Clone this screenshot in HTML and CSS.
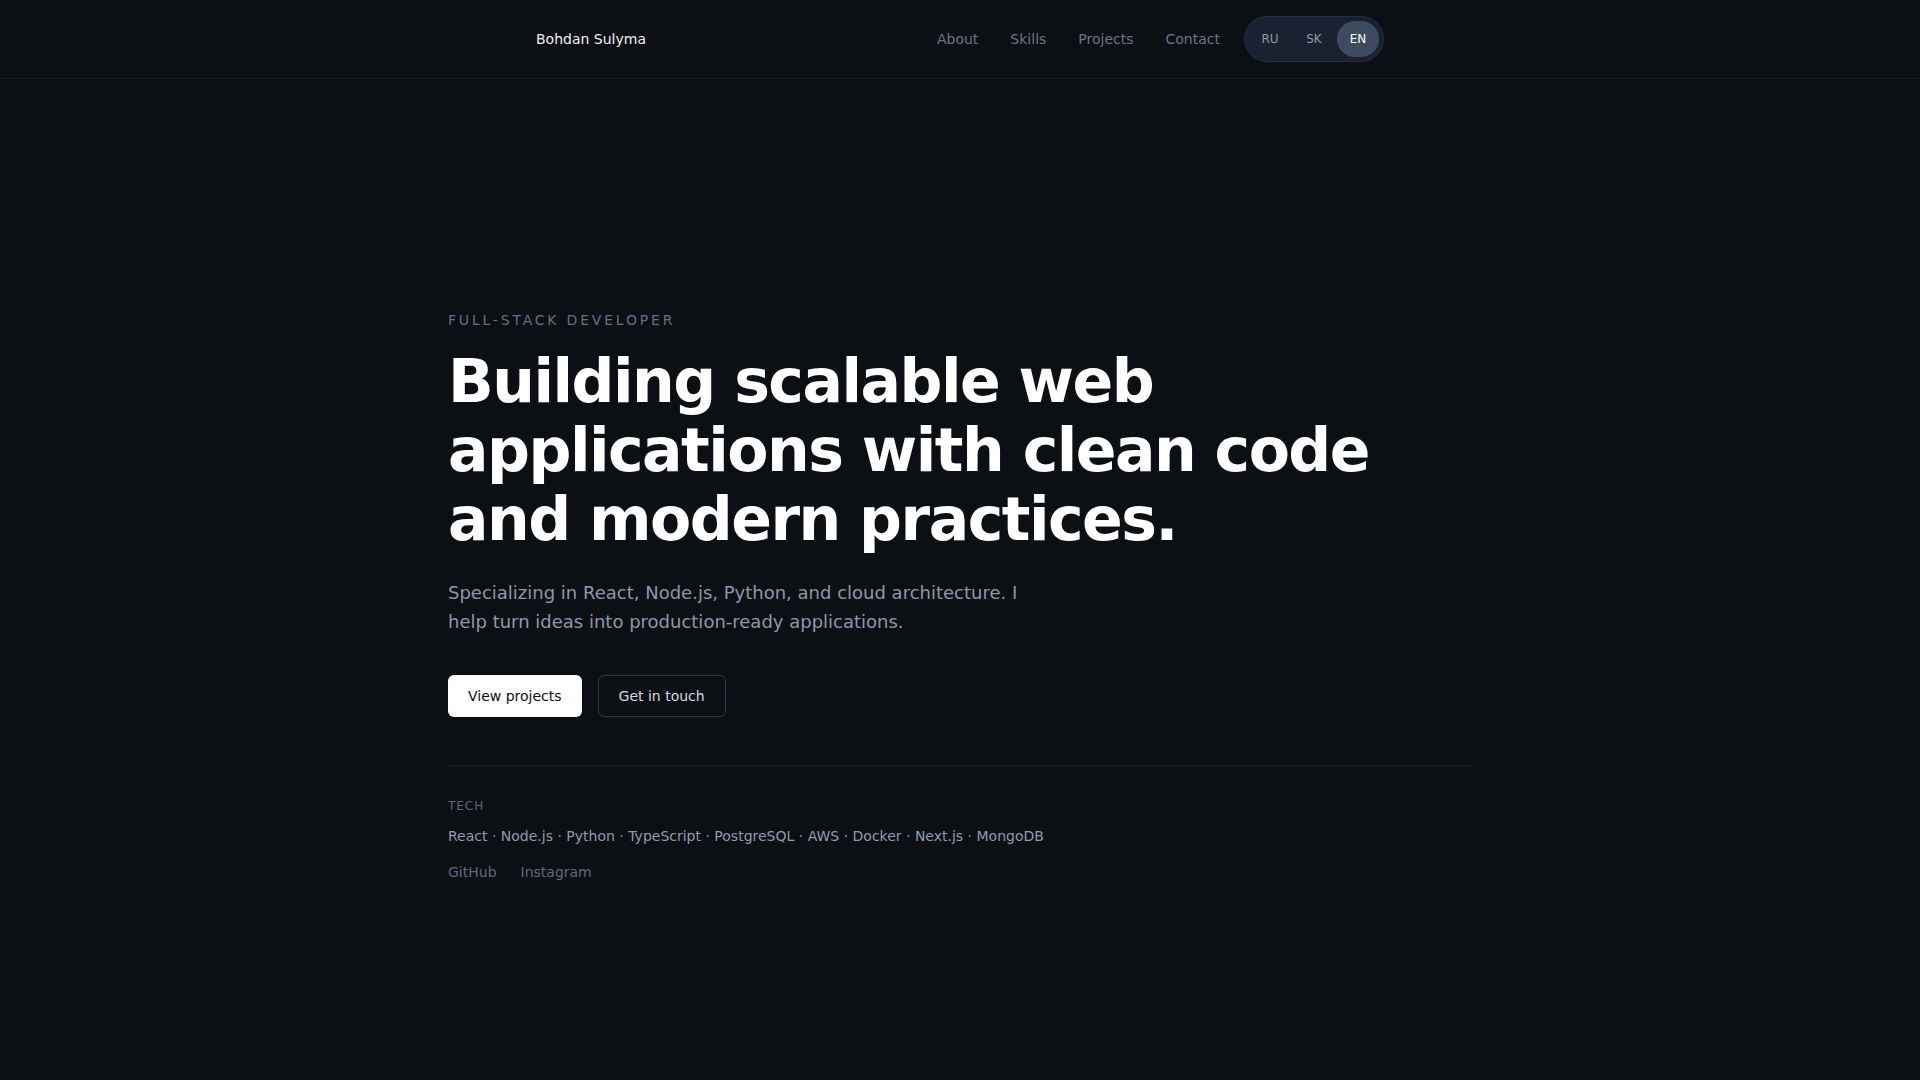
FILE: index.html
```html
<!DOCTYPE html>
<html lang="en">
<head>
<meta charset="utf-8">
<title>Bohdan Sulyma</title>
<link rel="stylesheet" href="styles.css">
</head>
<body>
<header class="site-header">
  <div class="header-inner">
    <a class="brand" href="#">Bohdan Sulyma</a>
    <nav class="nav">
      <a href="#about">About</a>
      <a href="#skills">Skills</a>
      <a href="#projects">Projects</a>
      <a href="#contact">Contact</a>
      <div class="lang">
        <button class="lang-btn">RU</button>
        <button class="lang-btn">SK</button>
        <button class="lang-btn active">EN</button>
      </div>
    </nav>
  </div>
</header>
<main class="hero">
  <div class="hero-inner">
    <p class="eyebrow">Full-stack developer</p>
    <h1 class="title">Building scalable web applications with clean code and modern practices.</h1>
    <p class="lead">Specializing in React, Node.js, Python, and cloud architecture. I help turn ideas into production-ready applications.</p>
    <div class="actions">
      <a class="btn btn-primary" href="#projects">View projects</a>
      <a class="btn btn-outline" href="#contact">Get in touch</a>
    </div>
    <div class="meta">
      <p class="meta-label">Tech</p>
      <p class="tech">React · Node.js · Python · TypeScript · PostgreSQL · AWS · Docker · Next.js · MongoDB</p>
      <div class="socials">
        <a href="#">GitHub</a>
        <a href="#">Instagram</a>
      </div>
    </div>
  </div>
</main>
</body>
</html>
```

FILE: styles.css
```css
* { box-sizing: border-box; }
html, body { margin: 0; padding: 0; }
body {
  background: #0c0f14;
  color: #e5e7eb;
  font-family: "DejaVu Sans", sans-serif;
  min-height: 100vh;
}
a { text-decoration: none; color: inherit; }

.site-header {
  border-bottom: 1px solid #151b27;
}
.header-inner {
  max-width: 896px;
  margin: 0 auto;
  padding: 16px 24px;
  display: flex;
  align-items: center;
  justify-content: space-between;
}
.brand {
  font-size: 14px;
  color: #eef0f3;
}
.nav {
  display: flex;
  align-items: center;
  gap: 32px;
  font-size: 14px;
}
.nav a { color: #6b7588; }
.lang {
  margin-left: -8px;
  display: flex;
  gap: 2px;
  padding: 4px;
  border: 1px solid #263042;
  background: #1a2231;
  border-radius: 999px;
}
.lang-btn {
  width: 42px;
  height: 36px;
  border: 0;
  border-radius: 999px;
  background: transparent;
  color: #8e99ad;
  font-family: "DejaVu Sans", sans-serif;
  font-size: 12px;
  padding: 0;
}
.lang-btn.active {
  background: #3e4a60;
  color: #ffffff;
}

.hero-inner {
  max-width: 1024px;
  margin: 0 auto;
  padding-top: 233px;
}
.eyebrow {
  margin: 0;
  font-size: 14px;
  line-height: 17px;
  letter-spacing: 0.2em;
  text-transform: uppercase;
  color: #64708a;
}
.title {
  margin: 18px 0 0;
  font-size: 60px;
  line-height: 69px;
  font-weight: 700;
  letter-spacing: -0.025em;
  color: #ffffff;
  max-width: 960px;
}
.lead {
  margin: 24px 0 0;
  max-width: 600px;
  font-size: 18px;
  line-height: 29.25px;
  color: #8d98ab;
}
.actions {
  margin-top: 38px;
  display: flex;
  gap: 16px;
}
.btn {
  display: inline-block;
  height: 42px;
  line-height: 40px;
  padding: 0 19px;
  font-size: 14px;
  border-radius: 6px;
  border: 1px solid transparent;
}
.btn-primary {
  background: #ffffff;
  color: #0c0f14;
}
.btn-outline {
  padding: 0 20px;
  border-color: #2b3648;
  color: #d3d8e0;
}
.meta {
  margin-top: 48px;
  border-top: 1px solid #1a202b;
  padding-top: 32px;
}
.meta-label {
  margin: 0;
  font-size: 12px;
  line-height: 16px;
  letter-spacing: 0.08em;
  text-transform: uppercase;
  color: #5d687c;
}
.tech {
  margin: 12px 0 0;
  font-size: 14px;
  line-height: 20px;
  color: #8f9bb0;
}
.socials {
  margin-top: 16px;
  display: flex;
  gap: 24px;
  font-size: 14px;
  line-height: 20px;
}
.socials a { color: #5f6a7e; }
```
